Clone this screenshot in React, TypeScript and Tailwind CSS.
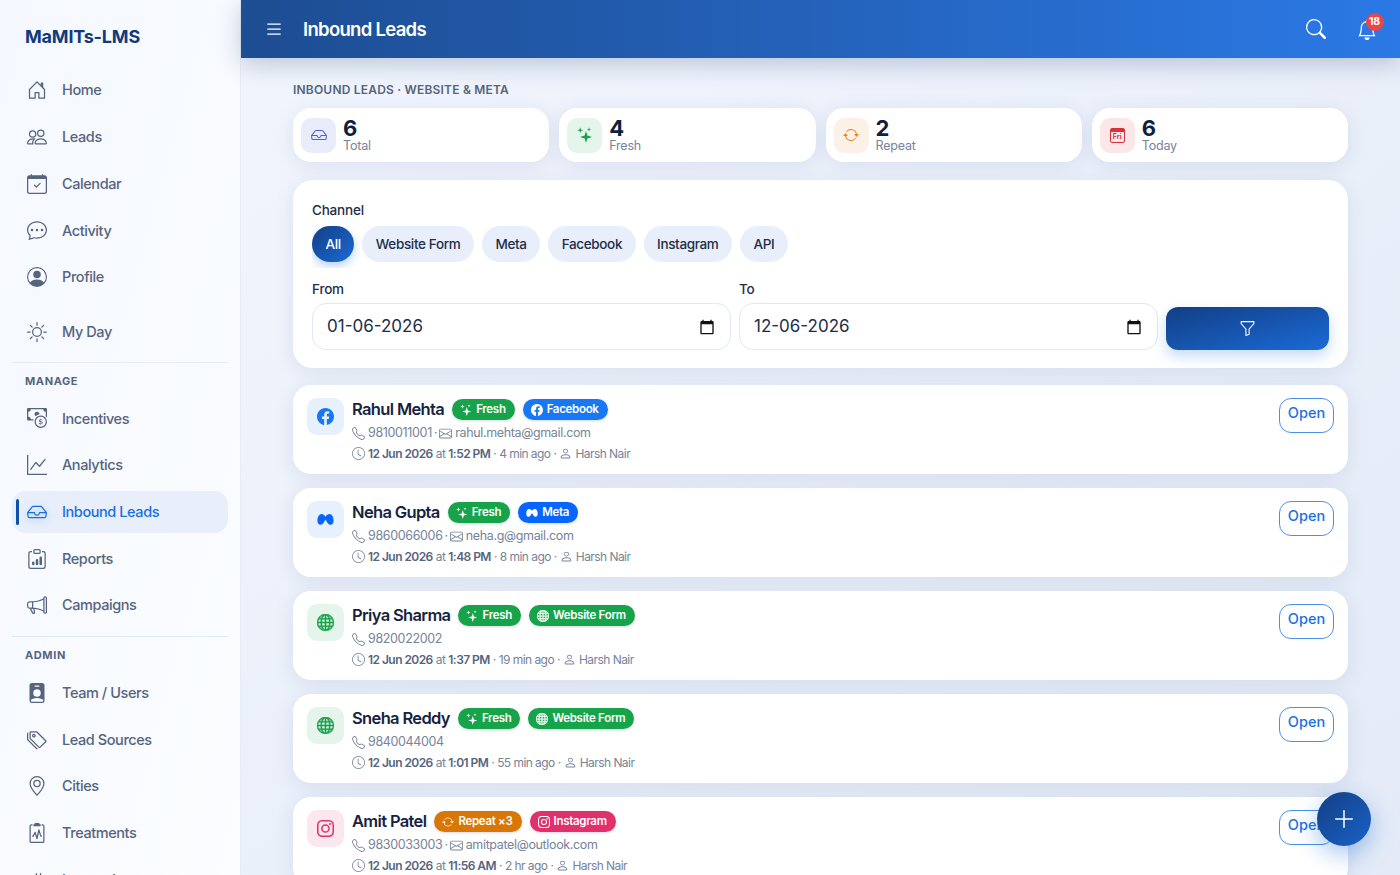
import React from 'react';
import {
  BsHouseDoor, BsPeople, BsCalendarCheck, BsChatDots, BsPersonCircle, BsSun, BsCashCoin, BsGraphUp,
  BsInbox, BsClipboardData, BsMegaphone, BsPersonBadgeFill, BsTags, BsGeoAlt, BsClipboard2Pulse,
  BsHash, BsFacebook, BsGlobe, BsInstagram, BsArrowRepeat, BsTelephone, BsEnvelope,
  BsClock, BsPerson, BsFunnel, BsBell, BsSearch, BsList, BsPlusLg,
} from 'react-icons/bs';

type NavItem = { label: string; icon: React.ReactNode; active?: boolean };

const mainNav: NavItem[] = [
  { label: 'Home', icon: <BsHouseDoor /> },
  { label: 'Leads', icon: <BsPeople /> },
  { label: 'Calendar', icon: <BsCalendarCheck /> },
  { label: 'Activity', icon: <BsChatDots /> },
  { label: 'Profile', icon: <BsPersonCircle /> },
];
const manageNav: NavItem[] = [
  { label: 'Incentives', icon: <BsCashCoin /> },
  { label: 'Analytics', icon: <BsGraphUp /> },
  { label: 'Inbound Leads', icon: <BsInbox />, active: true },
  { label: 'Reports', icon: <BsClipboardData /> },
  { label: 'Campaigns', icon: <BsMegaphone /> },
];
const adminNav: NavItem[] = [
  { label: 'Team / Users', icon: <BsPersonBadgeFill /> },
  { label: 'Lead Sources', icon: <BsTags /> },
  { label: 'Cities', icon: <BsGeoAlt /> },
  { label: 'Treatments', icon: <BsClipboard2Pulse /> },
  { label: 'Integrations', icon: <BsHash /> },
];

// four point sparkles, big one low and two small ones above
const SparkIcon: React.FC = () => (
  <svg viewBox="0 0 16 16" width="1em" height="1em" fill="currentColor">
    <path d="M9 4l1.400 4.600 4.600 1.400-4.600 1.400L9 16l-1.400-4.600L3 10l4.600-1.400z" />
    <path d="M3.200.2l.7 2.300 2.300.7-2.300.7-.7 2.300-.7-2.300-2.300-.7 2.300-.7z" />
    <path d="M12 .2l.5 1.700 1.700.5-1.700.5-.5 1.700-.5-1.700-1.700-.5 1.700-.5z" />
  </svg>
);

const MetaIcon: React.FC = () => (
  <svg viewBox="0 0 16 16" width="1em" height="1em" fill="currentColor">
    <path d="M4.200 2.800C2 2.800.4 5.600.4 8.900c0 2.500 1.100 4.100 2.900 4.100 1.900 0 3-1.800 4.700-5 1.700 3.200 2.800 5 4.700 5 1.800 0 2.900-1.600 2.900-4.100 0-3.300-1.600-6.100-3.800-6.100-1.500 0-2.800 1-3.800 2.500-1-1.500-2.300-2.500-3.800-2.500z" />
  </svg>
);

const NativeCalendar: React.FC = () => (
  <svg viewBox="0 0 24 24" width="16" height="16" fill="#111">
    <path d="M20 3h-1V1h-2v2H7V1H5v2H4c-1.100 0-2 .9-2 2v16c0 1.100.9 2 2 2h16c1.100 0 2-.9 2-2V5c0-1.100-.9-2-2-2zm0 18H4V8h16v13z" />
  </svg>
);

const NavRow: React.FC<{ item: NavItem }> = ({ item }) => (
  <div
    className={`relative flex h-[42.7px] shrink-0 items-center gap-[15px] rounded-[14px] px-[15px] text-[14.5px] font-medium tracking-[-0.42px] ${
      item.active ? 'bg-[#e8effb] text-[#1a6fe0]' : 'text-[#56647e]'
    }`}
  >
    {item.active && <span className="absolute left-[4px] top-[8px] h-[26px] w-[3px] rounded-full bg-[#0f4fa8]" />}
    <span className={`text-[20px] ${item.active ? 'text-[#1a6fe0] drop-shadow-[0_2px_4px_rgba(26,111,224,0.35)]' : 'text-[#56647e]'}`}>{item.icon}</span>
    {item.label}
  </div>
);

const Sidebar: React.FC = () => (
  <aside className="flex h-full w-[241px] shrink-0 flex-col overflow-hidden border-r border-[#e6ebf6] bg-gradient-to-br from-[#f5f8fe] to-[#fbfdff] px-[12px]">
    <div className="pl-[13px] pt-[25px] pb-[21px] text-[18px] leading-[23px] font-bold tracking-[-0.2px] text-[#123a78]">MaMITs-LMS</div>
    <div className="flex flex-col gap-[4px]">
      {mainNav.map((n) => (
        <NavRow key={n.label} item={n} />
      ))}
    </div>
    <div className="mt-[12px]">
      <NavRow item={{ label: 'My Day', icon: <BsSun /> }} />
    </div>
    <div className="mt-[9px] border-t border-[#e8ecf6]" />
    <div className="pl-[13px] pt-[11px] pb-[9px] text-[11px] leading-[14px] font-bold tracking-[0.6px] text-[#56647e]">MANAGE</div>
    <div className="flex flex-col gap-[4px]">
      {manageNav.map((n) => (
        <NavRow key={n.label} item={n} />
      ))}
    </div>
    <div className="mt-[9px] border-t border-[#e2e9f6]" />
    <div className="pl-[13px] pt-[11px] pb-[10px] text-[11px] leading-[14px] font-bold tracking-[0.6px] text-[#56647e]">ADMIN</div>
    <div className="flex flex-col gap-[4px]">
      {adminNav.map((n) => (
        <NavRow key={n.label} item={n} />
      ))}
    </div>
  </aside>
);

const cardShadow = 'shadow-[0_4px_20px_rgba(40,70,130,0.10)]';

const Stat: React.FC<{ value: string; label: string; box: string; icon: React.ReactNode }> = ({ value, label, box, icon }) => (
  <div className={`flex h-[54px] items-center gap-[7px] rounded-[18px] bg-white pl-[8px] ${cardShadow}`}>
    <div className={`flex h-[35px] w-[35px] items-center justify-center rounded-[10px] text-[16px] ${box}`}>{icon}</div>
    <div className="flex flex-col">
      <span className="text-[22px] leading-[21px] font-bold text-[#0f1f3d]">{value}</span>
      <span className="text-[12.5px] leading-[14px] tracking-[-0.2px] text-[#76839a]">{label}</span>
    </div>
  </div>
);

const pillBase = 'flex h-[36px] items-center rounded-full px-[13.5px] text-[13.5px] font-medium tracking-[-0.35px]';

const DateField: React.FC<{ label: string; value: string }> = ({ label, value }) => (
  <div className="flex flex-1 flex-col">
    <label className="mb-[4px] text-[13.5px] leading-[20px] font-medium tracking-[-0.2px] text-[#1e2d49]">{label}</label>
    <div className="flex h-[47px] items-center justify-between rounded-[14px] border border-[#e2e8f5] bg-white pl-[14px] pr-[15px] text-[17px] text-[#1e2d49]">
      {value}
      <NativeCalendar />
    </div>
  </div>
);

type Channel = 'facebook' | 'meta' | 'web' | 'instagram';

const channelInfo: Record<Channel, { label: string; icon: React.ReactNode; box: string; pill: string }> = {
  facebook: { label: 'Facebook', icon: <BsFacebook />, box: 'bg-[#e7f0fd] text-[#1877f2]', pill: 'bg-[#1877f2]' },
  meta: { label: 'Meta', icon: <MetaIcon />, box: 'bg-[#e7f0fd] text-[#0866ff]', pill: 'bg-[#0866ff]' },
  web: { label: 'Website Form', icon: <BsGlobe strokeWidth={0.5} />, box: 'bg-[#e6f5ec] text-[#16a34a]', pill: 'bg-[#16a34a]' },
  instagram: { label: 'Instagram', icon: <BsInstagram />, box: 'bg-[#fde7ef] text-[#e1306c]', pill: 'bg-[#e1306c]' },
};

type Lead = { name: string; phone: string; email?: string; date: string; time: string; ago: string; channel: Channel; repeat?: boolean };

const leads: Lead[] = [
  { name: 'Rahul Mehta', phone: '9810011001', email: 'rahul.mehta@gmail.com', date: '12 Jun 2026', time: '1:52 PM', ago: '4 min ago', channel: 'facebook' },
  { name: 'Neha Gupta', phone: '9860066006', email: 'neha.g@gmail.com', date: '12 Jun 2026', time: '1:48 PM', ago: '8 min ago', channel: 'meta' },
  { name: 'Priya Sharma', phone: '9820022002', date: '12 Jun 2026', time: '1:37 PM', ago: '19 min ago', channel: 'web' },
  { name: 'Sneha Reddy', phone: '9840044004', date: '12 Jun 2026', time: '1:01 PM', ago: '55 min ago', channel: 'web' },
  { name: 'Amit Patel', phone: '9830033003', email: 'amitpatel@outlook.com', date: '12 Jun 2026', time: '11:56 AM', ago: '2 hr ago', channel: 'instagram', repeat: true },
];

const Badge: React.FC<{ bg: string; icon: React.ReactNode; label: string }> = ({ bg, icon, label }) => (
  <span className={`flex h-[21px] items-center gap-[4px] rounded-full pl-[8px] pr-[9px] text-[11.5px] font-semibold tracking-[-0.3px] text-white shadow-[0_1px_3px_rgba(30,60,120,0.2)] ${bg}`}>
    <span className="text-[12px]">{icon}</span>
    {label}
  </span>
);

const LeadCard: React.FC<{ lead: Lead }> = ({ lead }) => {
  const ch = channelInfo[lead.channel];
  return (
    <div className={`flex h-[89px] shrink-0 items-start rounded-[18px] bg-white pl-[14px] pr-[14px] pt-[12.5px] ${cardShadow}`}>
      <div className={`flex h-[37px] w-[37px] shrink-0 items-center justify-center rounded-[10px] text-[17px] ${ch.box}`}>{ch.icon}</div>
      <div className="ml-[8px] flex flex-col">
        <div className="flex h-[24px] items-center gap-[8px]">
          <span className="text-[16.5px] font-semibold tracking-[-0.65px] text-[#16233f]">{lead.name}</span>
          {lead.repeat ? (
            <Badge bg="bg-[#d97706]" icon={<BsArrowRepeat />} label="Repeat ×3" />
          ) : (
            <Badge bg="bg-[#16a34a]" icon={<SparkIcon />} label="Fresh" />
          )}
          <Badge bg={ch.pill} icon={ch.icon} label={ch.label} />
        </div>
        <div className="mt-[2px] flex h-[20px] items-center text-[12.5px] tracking-[-0.35px] text-[#76839a]">
          <BsTelephone className="mr-[3px] text-[13px]" />
          {lead.phone}
          {lead.email && (
            <>
              <span className="mx-[2px]">·</span>
              <BsEnvelope className="mr-[3px] text-[13px]" />
              {lead.email}
            </>
          )}
        </div>
        <div className="flex h-[20px] items-center text-[12px] tracking-[-0.55px] text-[#76839a]">
          <BsClock className="mr-[3px] text-[13px]" />
          <b className="font-semibold text-[#56647e]">{lead.date}</b>
          <span className="mx-[3px]">at</span>
          <b className="font-semibold text-[#56647e]">{lead.time}</b>
          <span className="mx-[3px]">·</span>
          {lead.ago}
          <span className="mx-[3px]">·</span>
          <BsPerson className="mr-[3px] text-[13px]" />
          Harsh Nair
        </div>
      </div>
      <button className="ml-auto flex h-[35px] w-[55px] shrink-0 items-center justify-center rounded-[12px] border-[1.5px] border-[#4a90e8] pb-[4px] text-[14.5px] font-medium text-[#1a6fe0]">
        Open
      </button>
    </div>
  );
};

export default function App() {
  return (
    <div className="relative flex h-[875px] w-[1400px] overflow-hidden font-['Inter',sans-serif]">
      <Sidebar />
      <div className="flex min-w-0 flex-1 flex-col bg-gradient-to-br from-[#f1f5fd] to-[#e4ebf7]">
        <header className="relative z-10 flex h-[58px] shrink-0 items-center bg-gradient-to-r from-[#1d4d92] to-[#2b79e6] pl-[23px] pr-[23px] text-white shadow-[0_6px_24px_rgba(30,60,110,0.25)]">
          <BsList className="text-[20px]" />
          <span className="ml-[19px] mt-[2px] text-[18.5px] font-semibold tracking-[-0.7px]">Inbound Leads</span>
          <BsSearch className="ml-auto text-[20px]" />
          <div className="relative ml-[31px] mt-[1px]">
            <BsBell className="text-[20px]" />
            <span className="absolute -top-[6.5px] left-[8.5px] flex h-[18px] w-[18px] items-center justify-center rounded-full bg-[#ef4444] text-[10.5px] font-bold tracking-[-0.3px]">18</span>
          </div>
        </header>
        <main className="flex min-h-0 flex-1 flex-col overflow-hidden pl-[52px] pr-[52px] pt-[24px]">
          <div className="text-[12px] leading-[16px] font-semibold tracking-[0.2px] text-[#56647e]">INBOUND LEADS · WEBSITE &amp; META</div>
          <div className="mt-[10px] grid grid-cols-4 gap-[10px]">
            <Stat value="6" label="Total" box="bg-[#e9ecfb] text-[#4f5fe0]" icon={<BsInbox />} />
            <Stat value="4" label="Fresh" box="bg-[#e6f5ec] text-[#16a34a]" icon={<SparkIcon />} />
            <Stat value="2" label="Repeat" box="bg-[#fcf1e6] text-[#e58a1f]" icon={<BsArrowRepeat />} />
            <Stat
              value="6"
              label="Today"
              box="bg-[#fbe7e8] text-[#dc2f3c]"
              icon={
                <span className="flex h-[15px] w-[15px] flex-col rounded-[2px] border border-[#dc2f3c] text-center text-[7px] leading-[10px] font-bold">
                  <span className="h-[3px] bg-[#dc2f3c]" />
                  Fri
                </span>
              }
            />
          </div>
          <section className={`mt-[18px] shrink-0 rounded-[20px] bg-white px-[19px] pt-[21px] pb-[18px] ${cardShadow}`}>
            <div className="text-[13.5px] leading-[18px] font-medium tracking-[-0.2px] text-[#1e2d49]">Channel</div>
            <div className="mt-[7px] flex gap-[8px] overflow-hidden pb-[6px]">
              <span className={`${pillBase} bg-gradient-to-br from-[#123f85] to-[#1a6bd8] text-white shadow-[0_4px_10px_rgba(26,107,216,0.3)]`}>All</span>
              {['Website Form', 'Meta', 'Facebook', 'Instagram', 'API'].map((c) => (
                <span key={c} className={`${pillBase} bg-[#e8effb] text-[#1e2d49]`}>{c}</span>
              ))}
            </div>
            <div className="mt-[11px] flex items-end gap-[8px]">
              <DateField label="From" value="01-06-2026" />
              <DateField label="To" value="12-06-2026" />
              <button className="flex h-[43px] w-[163px] shrink-0 items-center justify-center rounded-[12px] bg-gradient-to-br from-[#123f85] to-[#1a6bd8] text-[17px] text-white shadow-[0_6px_14px_rgba(26,107,216,0.25)]">
                <BsFunnel />
              </button>
            </div>
          </section>
          <div className="mt-[17px] flex flex-col gap-[14px]">
            {leads.map((l) => (
              <LeadCard key={l.name} lead={l} />
            ))}
          </div>
        </main>
      </div>
      <button className="absolute bottom-[29px] right-[29px] z-20 flex h-[54px] w-[54px] items-center justify-center rounded-full bg-gradient-to-br from-[#123f85] to-[#1a62c8] text-[24px] text-white shadow-[0_8px_24px_rgba(26,107,216,0.4)]">
        <BsPlusLg />
      </button>
    </div>
  );
}
